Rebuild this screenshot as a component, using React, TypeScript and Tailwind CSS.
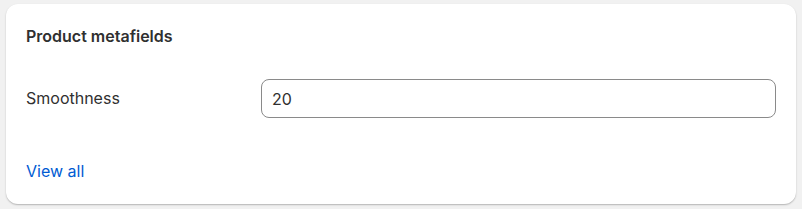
import { useState } from "react";

export default function App() {
  const [value, setValue] = useState("20");

  return (
    <div className="min-h-[209px] bg-[#f1f1f1] px-[6px] pt-[4px] pb-[5px] font-['Inter',sans-serif] text-[#303030]">
      <div className="h-[200px] rounded-xl bg-white px-5 pt-[23px] shadow-[0_1px_0_0_rgba(26,26,26,0.07),0_1px_2px_0_rgba(0,0,0,0.2)]">
        {/* Header */}
        <h2 className="text-[16px] font-semibold leading-[18px]">Product metafields</h2>

        {/* Field row */}
        <div className="mt-[34px] flex items-center">
          <label className="w-[235px] shrink-0 text-[16px] leading-[20px] -translate-y-px">Smoothness</label>
          <input
            type="text"
            value={value}
            onChange={(e) => setValue(e.target.value)}
            className="h-[39px] w-[516px] rounded-lg border border-[#8a8a8a] px-[10px] text-[16px] text-[#303030] focus:outline-none"
          />
        </div>

        {/* Footer link */}
        <a href="#" className="mt-[43px] inline-block text-[16px] leading-[20px] text-[#005bd3] hover:underline">
          View all
        </a>
      </div>
    </div>
  );
}
